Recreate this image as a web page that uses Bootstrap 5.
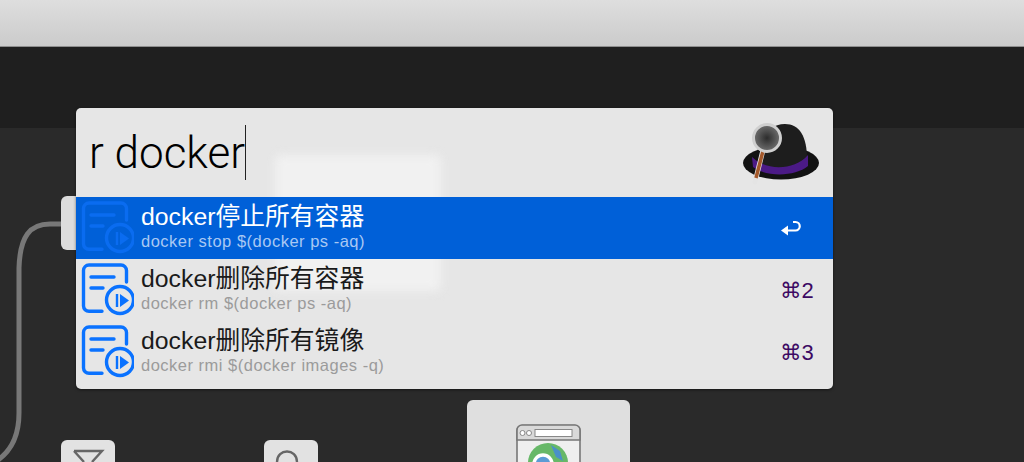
<!DOCTYPE html>
<html lang="zh">
<head>
  <meta charset="UTF-8">
  <title>Alfred docker</title>
  <link href="https://cdn.jsdelivr.net/npm/bootstrap@5.3.2/dist/css/bootstrap.min.css" rel="stylesheet">
  <style>
    body { background: #2a2a2a; height: 462px; overflow: hidden; font-family: "Liberation Sans", "Noto Sans CJK SC", sans-serif; }
    .top-bar { background: linear-gradient(#dedede, #cbcbcb); border-bottom: 1px solid #8e8e8e; box-sizing: content-box; height: 46px; }
    .dark-band { height: 81px; background: #1f1f1f; }
    .workflow-canvas { height: 334px; background: #2a2a2a; }
    .wf-node { position: absolute; background: #e2e2e2; border-radius: 6px 6px 0 0; }
    .wf-node-a { left: 61px; top: 68px; width: 60px; height: 54px; background: #dcdcdc; border-radius: 6px; }
    .wf-node-b { left: 61px; top: 312px; width: 54px; height: 22px; }
    .wf-node-c { left: 264px; top: 312px; width: 54px; height: 22px; }
    .wf-node-d { left: 467px; top: 272px; width: 163px; height: 62px; background: #dfdfdf; }
    .wf-node svg { display: block; }
    .wf-wire { position: absolute; left: 0; top: 80px; }
    .alfred-panel { position: absolute; left: 76px; top: 108px; width: 757px; height: 281px; background: #e6e6e6; border-radius: 5px; overflow: hidden; box-shadow: 0 1px 3px rgba(0,0,0,.5); z-index: 2; }
    .ghost-card { position: absolute; left: 199px; top: 47px; width: 166px; height: 136px; background: #f1f1f1; border-radius: 5px; filter: blur(5px); }
    .search-box { height: 89px; position: relative; }
    .search-text { font-family: "Roboto", "Liberation Sans", sans-serif; font-weight: 300; font-size: 44px; line-height: 1; color: #000; padding-left: 13px; padding-top: 17px; }
    .caret-line { display: inline-block; width: 1px; height: 55px; background: #222; vertical-align: -12px; }
    .hat-logo { position: absolute; left: 664px; top: 11px; }
    .result-row { height: 62px; position: relative; padding-left: 65px; }
    .result-row.active { background: #0060d8; }
    .row-icon { position: absolute; left: 4px; top: 4px; color: #0a72ff; }
    .active .row-icon { color: #0a6cf0; }
    .row-title { font-size: 24.8px; line-height: 28px; padding-top: 6px; color: #1a1a1a; }
    .row-sub { font-size: 16.5px; line-height: 18px; padding-top: 1px; color: #9b9b9b; letter-spacing: .5px; }
    .active .row-title { color: #fff; }
    .active .row-sub { color: #a9c8f3; }
    .row-key { position: absolute; left: 704px; top: 19px; font-size: 22px; line-height: 26px; color: #3d0a63; }
    .row-key .cmd-glyph { font-family: "DejaVu Sans", sans-serif; font-size: 21.5px; }
    .row-key svg { display: block; }
  </style>
</head>
<body>
  <div class="top-bar"></div>
  <div class="dark-band"></div>
  <div class="workflow-canvas position-relative overflow-hidden">
    <svg class="wf-wire" width="62" height="254" viewBox="0 0 62 254" fill="none">
      <path d="M62 16 H50 C30 16 20 28 19 60 V205 C19 225 12 242 -2 252" stroke="#787878" stroke-width="5"/>
    </svg>
    <div class="wf-node wf-node-a"></div>
    <div class="wf-node wf-node-b">
      <svg width="54" height="22" viewBox="0 0 54 22" fill="none"><path d="M13 11 H41 L31 22 M13 11 L23 22" stroke="#666" stroke-width="2.400"/></svg>
    </div>
    <div class="wf-node wf-node-c">
      <svg width="54" height="22" viewBox="0 0 54 22" fill="none"><path d="M13 22 C13 8 33 8 33 22" stroke="#666" stroke-width="2.400"/></svg>
    </div>
    <div class="wf-node wf-node-d">
      <svg width="163" height="62" viewBox="0 0 163 62">
        <rect x="50" y="25.500" width="63" height="50" rx="5" fill="#efefef" stroke="#777" stroke-width="1.600"/>
        <path d="M50 30 a5 5 0 0 1 5-5 h53 a5 5 0 0 1 5 5 v10 h-63z" fill="#d9d9d9" stroke="#777" stroke-width="1.600"/>
        <circle cx="55.500" cy="33" r="2.500" fill="#fff" stroke="#888"/>
        <circle cx="62" cy="33" r="2.500" fill="#fff" stroke="#888"/>
        <rect x="68" y="29.500" width="37" height="7" fill="#fff" stroke="#888"/>
        <ellipse cx="81" cy="63" rx="20" ry="20" fill="#67b868"/>
        <circle cx="76" cy="64" r="9" fill="#5b9bd5" stroke="#fff" stroke-width="3.500"/>
        <path d="M84 45 l9 6 l3 10 -7-4z" fill="#4a90c8"/>
      </svg>
    </div>
  </div>

  <div class="alfred-panel">
    <div class="ghost-card"></div>
    <div class="search-box">
      <div class="search-text position-relative">r docker<span class="caret-line"></span></div>
      <svg class="hat-logo" width="82" height="68" viewBox="0 0 82 68">
        <defs>
          <radialGradient id="lens" cx=".5" cy=".5" r=".6"><stop offset="0" stop-color="#2c2c2c"/><stop offset="1" stop-color="#7d7d7d"/></radialGradient>
        </defs>
        <ellipse cx="41" cy="44" rx="38" ry="16.500" fill="#121212"/>
        <path d="M20 42 C20 16 30 5 45 5 C60 5 68 18 67 46 C55 56 30 56 20 42z" fill="#1d1d1d"/>
        <path d="M12 38 C26 52 54 52 68 36 L68 47 C55 58 26 58 13 48z" fill="#4b1a86"/>
        <path d="M15 63 L23 31" stroke="#e4e4e4" stroke-width="5" stroke-linecap="round"/>
        <path d="M16 59 L23 32" stroke="#a4582a" stroke-width="3.500"/>
        <circle cx="27" cy="19" r="13.500" fill="url(#lens)" stroke="#cfcfcf" stroke-width="3"/>
      </svg>
    </div>
    <div class="result-row active">
      <svg class="row-icon" width="54" height="54" viewBox="0 0 54 54" fill="none" stroke="currentColor" stroke-width="3.400" stroke-linecap="round">
        <path d="M22 48.300 H9 a5.500 5.500 0 0 1-5.500-5.500 V7.500 a5.500 5.500 0 0 1 5.500-5.500 H41 a5.500 5.500 0 0 1 5.500 5.500 V19"/>
        <path d="M11 14 H34 M11 25 H23"/>
        <circle cx="40" cy="37" r="13.500"/>
        <path d="M37 31 V44" stroke-width="2.400" stroke-linecap="butt"/>
        <path d="M40 31 L49 37.500 L40 44z" fill="currentColor" stroke="none"/>
      </svg>
      <div class="row-title">docker停止所有容器</div>
      <div class="row-sub">docker stop $(docker ps -aq)</div>
      <div class="row-key">
        <svg width="22" height="24" viewBox="0 0 22 24" fill="none" stroke="#fff" stroke-width="2.200"><path d="M13 6 H15.500 a3.800 3.800 0 0 1 0 8.500 H5"/><path d="M8 9.500 L1 14.500 L8 19.500z" fill="#fff" stroke="none"/></svg>
      </div>
    </div>
    <div class="result-row">
      <svg class="row-icon" width="54" height="54" viewBox="0 0 54 54" fill="none" stroke="currentColor" stroke-width="3.400" stroke-linecap="round">
        <path d="M22 48.300 H9 a5.500 5.500 0 0 1-5.500-5.500 V7.500 a5.500 5.500 0 0 1 5.500-5.500 H41 a5.500 5.500 0 0 1 5.500 5.500 V19"/>
        <path d="M11 14 H34 M11 25 H23"/>
        <circle cx="40" cy="37" r="13.500"/>
        <path d="M37 31 V44" stroke-width="2.400" stroke-linecap="butt"/>
        <path d="M40 31 L49 37.500 L40 44z" fill="currentColor" stroke="none"/>
      </svg>
      <div class="row-title">docker删除所有容器</div>
      <div class="row-sub">docker rm $(docker ps -aq)</div>
      <div class="row-key"><span class="cmd-glyph">⌘</span>2</div>
    </div>
    <div class="result-row">
      <svg class="row-icon" width="54" height="54" viewBox="0 0 54 54" fill="none" stroke="currentColor" stroke-width="3.400" stroke-linecap="round">
        <path d="M22 48.300 H9 a5.500 5.500 0 0 1-5.500-5.500 V7.500 a5.500 5.500 0 0 1 5.500-5.500 H41 a5.500 5.500 0 0 1 5.500 5.500 V19"/>
        <path d="M11 14 H34 M11 25 H23"/>
        <circle cx="40" cy="37" r="13.500"/>
        <path d="M37 31 V44" stroke-width="2.400" stroke-linecap="butt"/>
        <path d="M40 31 L49 37.500 L40 44z" fill="currentColor" stroke="none"/>
      </svg>
      <div class="row-title">docker删除所有镜像</div>
      <div class="row-sub">docker rmi $(docker images -q)</div>
      <div class="row-key"><span class="cmd-glyph">⌘</span>3</div>
    </div>
  </div>
  <script src="https://cdn.jsdelivr.net/npm/bootstrap@5.3.2/dist/js/bootstrap.bundle.min.js"></script>
</body>
</html>
